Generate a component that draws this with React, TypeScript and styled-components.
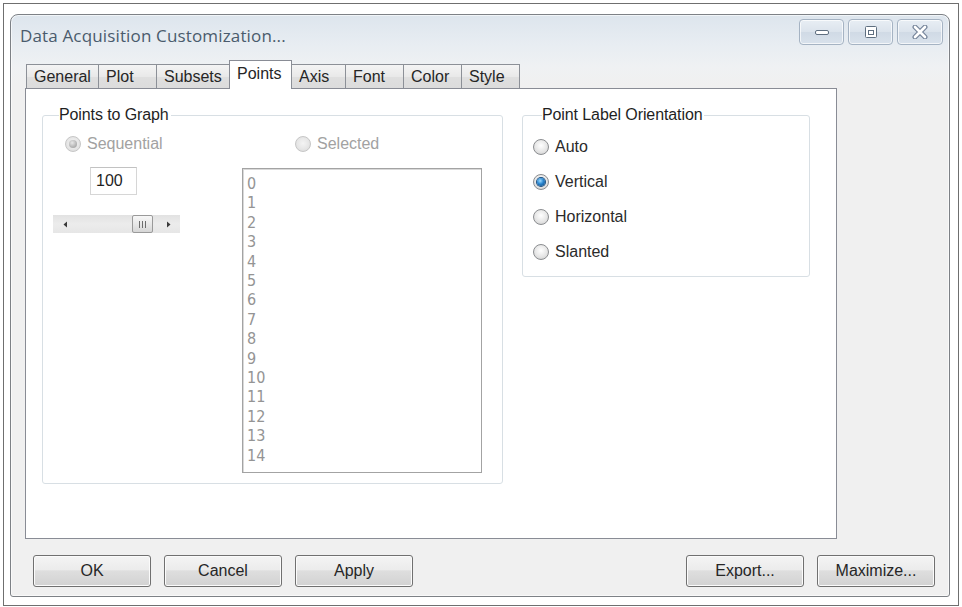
import React from 'react'
import styled, { createGlobalStyle, css } from 'styled-components'

const GlobalStyle = createGlobalStyle`
  html, body {
    margin: 0;
    padding: 0;
    background: #ffffff;
  }
  body {
    font-family: "Liberation Sans", Arial, sans-serif;
    font-size: 16px;
    color: #1f1f1f;
  }
  * {
    box-sizing: border-box;
  }
`

const Page = styled.div`
  width: 962px;
  height: 607px;
  padding: 3px 3px 1px 3px;
`

const Frame = styled.div`
  height: 603px;
  border: 1px solid #6f6f6f;
  padding: 10px 0 0 6px;
`

const Dialog = styled.div`
  width: 940px;
  height: 583px;
  border: 1px solid #7d8186;
  border-radius: 8px 8px 3px 3px;
  background: linear-gradient(to bottom, #dde5ed 0px, #e8edf2 30px, #eff1f3 52px, #f0f0f0 70px);
  display: flex;
  flex-direction: column;
  box-shadow: inset 0 0 0 1px rgba(255, 255, 255, 0.6);
`

const TitleBar = styled.div`
  height: 45px;
  display: flex;
  align-items: flex-start;
  justify-content: space-between;
  padding: 4px 6px 0 9px;
`

const Title = styled.div`
  font-family: "Open Sans", "Noto Sans", sans-serif;
  font-size: 17px;
  letter-spacing: 0.15px;
  color: #4a5b6c;
  padding-top: 5px;
`

const WindowButtons = styled.div`
  display: flex;
  gap: 4px;
`

const WindowButton = styled.div<{ wide?: boolean }>`
  width: ${({ wide }) => (wide ? 46 : 45)}px;
  height: 26px;
  border: 1px solid #a5b3c3;
  border-radius: 4px;
  background: linear-gradient(to bottom, #e8eef4 0%, #dbe3ec 50%, #d0dae5 51%, #d9e2ec 100%);
  box-shadow: inset 0 0 0 1px rgba(255, 255, 255, 0.7);
  display: flex;
  align-items: center;
  justify-content: center;
`

const TabStrip = styled.div`
  display: flex;
  align-items: flex-end;
  height: 29px;
  margin: 0 0 -1px 16px;
  position: relative;
  z-index: 1;
`

const Tab = styled.div<{ active?: boolean; w: number }>`
  width: ${({ w }) => w}px;
  height: 24px;
  margin-bottom: 1px;
  border: 1px solid #8c9097;
  border-bottom: none;
  margin-left: -1px;
  padding: 3px 0 0 7px;
  font-size: 16px;
  color: #262626;
  white-space: nowrap;
  background: linear-gradient(to bottom, #f4f4f4 0%, #e9e9e9 50%, #dfdfdf 51%, #dcdcdc 100%);
  ${({ active }) =>
    active &&
    css`
      height: 29px;
      margin-bottom: 0;
      padding-top: 4px;
      background: #ffffff;
      border-color: #898c95;
    `}
`

const Panel = styled.div`
  margin-left: 14px;
  width: 812px;
  height: 451px;
  border: 1px solid #898c95;
  background: #ffffff;
  display: flex;
  align-items: flex-start;
  gap: 19px;
  padding: 17px 0 0 16px;
`

const Group = styled.fieldset<{ w: number; pad: string }>`
  margin: 0;
  width: ${({ w }) => w}px;
  border: 1px solid #d8dfe4;
  border-radius: 3px;
  padding: ${({ pad }) => pad};
  min-width: 0;
`

const Legend = styled.legend<{ indent: number }>`
  margin-left: ${({ indent }) => indent}px;
  padding: 0 2px 0 0;
  font-size: 16px;
  line-height: 18px;
  color: #1f1f1f;
  letter-spacing: -0.1px;
`

const PointsBody = styled.div`
  display: flex;
  gap: 62px;
`

const LeftColumn = styled.div`
  width: 127px;
  display: flex;
  flex-direction: column;
`

const RightColumn = styled.div`
  display: flex;
  flex-direction: column;
`

const RadioRow = styled.label<{ disabled?: boolean; indent?: number }>`
  display: flex;
  align-items: center;
  gap: 6px;
  height: 20px;
  margin-left: ${({ indent }) => indent ?? 0}px;
  font-size: 16px;
  color: ${({ disabled }) => (disabled ? '#a2a2a2' : '#2b2b2b')};
`

const RadioCircle = styled.span<{ checked?: boolean; disabled?: boolean }>`
  width: 16px;
  height: 16px;
  flex: none;
  border-radius: 50%;
  border: 1px solid ${({ disabled }) => (disabled ? '#c6c6c6' : '#8b8d90')};
  background: ${({ disabled }) =>
    disabled
      ? 'radial-gradient(circle at 50% 45%, #f4f4f4 0%, #e6e6e6 55%, #d6d6d6 100%)'
      : 'radial-gradient(circle at 50% 40%, #ffffff 0%, #e6e6e6 55%, #cacaca 100%)'};
  display: flex;
  align-items: center;
  justify-content: center;

  &::after {
    content: '';
    display: ${({ checked }) => (checked ? 'block' : 'none')};
    width: 8px;
    height: 8px;
    border-radius: 50%;
    background: ${({ disabled }) =>
      disabled
        ? 'radial-gradient(circle at 40% 35%, #e8e8e8 0%, #b4b4b4 60%, #9a9a9a 100%)'
        : 'radial-gradient(circle at 40% 35%, #9fdcff 0%, #2a86d0 45%, #0e4377 100%)'};
    box-shadow: ${({ disabled }) => (disabled ? 'none' : '0 0 0 1px #1b4f80')};
  }
`

const NumberBox = styled.div`
  margin: 13px 0 0 37px;
  width: 47px;
  height: 28px;
  border: 1px solid #d6d6d6;
  border-top-color: #c2c2c2;
  background: #ffffff;
  font-size: 16px;
  color: #1f1f1f;
  padding: 4px 0 0 5px;
`

const ScrollBar = styled.div`
  margin-top: 20px;
  width: 127px;
  height: 18px;
  display: flex;
  background: linear-gradient(to bottom, #e2e2e2 0%, #ececec 50%, #e6e6e6 100%);
`

const ScrollArrow = styled.div`
  width: 24px;
  display: flex;
  align-items: center;
  justify-content: center;
`

const ScrollTrack = styled.div`
  flex: 1;
  display: flex;
`

const ScrollThumb = styled.div`
  width: 21px;
  height: 18px;
  border: 1px solid #9a9a9a;
  border-radius: 2px;
  background: linear-gradient(to bottom, #f7f7f7 0%, #e8e8e8 50%, #d6d6d6 100%);
  display: flex;
  align-items: center;
  justify-content: center;
  gap: 2px;
`

const Grip = styled.span`
  width: 1px;
  height: 7px;
  background: #6d6d6d;
`

const ListBox = styled.div`
  margin-top: 14px;
  width: 240px;
  height: 305px;
  border: 1px solid #a3a3a3;
  box-shadow: inset 1px 1px 0 #d9d9d9;
  background: #ffffff;
  padding: 5px 0 0 4px;
`

const ListItem = styled.div`
  font-family: "Liberation Sans Narrow", "DejaVu Sans Condensed", "Liberation Sans", sans-serif;
  font-size: 16px;
  line-height: 19.4px;
  color: #949494;
`

const OrientationList = styled.div`
  display: flex;
  flex-direction: column;
  gap: 15px;
`

const ButtonRow = styled.div`
  margin-top: 16px;
  padding: 0 14px 0 22px;
  display: flex;
  justify-content: space-between;
`

const ButtonGroup = styled.div`
  display: flex;
  gap: 13px;
`

const PushButton = styled.div`
  width: 118px;
  height: 32px;
  border: 1px solid #707070;
  border-radius: 3px;
  background: linear-gradient(to bottom, #f4f4f4 0%, #ececec 45%, #dedede 50%, #d2d2d2 100%);
  box-shadow: inset 0 0 0 1px #fbfbfb;
  display: flex;
  align-items: center;
  justify-content: center;
  font-size: 16px;
  color: #262626;
`

const tabs = [
  { label: 'General', w: 73 },
  { label: 'Plot', w: 59 },
  { label: 'Subsets', w: 74 },
  { label: 'Points', w: 63, active: true },
  { label: 'Axis', w: 55 },
  { label: 'Font', w: 59 },
  { label: 'Color', w: 59 },
  { label: 'Style', w: 59 },
]

const points = Array.from({ length: 15 }, (_, i) => i)

function MinimizeIcon() {
  return (
    <svg width="16" height="8" viewBox="0 0 16 8">
      <rect x="1.5" y="2.5" width="13" height="4" rx="1.5" fill="#ffffff" stroke="#5f6f80" />
    </svg>
  )
}

function MaximizeIcon() {
  return (
    <svg width="14" height="14" viewBox="0 0 14 14">
      <rect x="1.5" y="1.5" width="11" height="11" rx="1" fill="#ffffff" stroke="#5f6f80" />
      <rect x="4.5" y="5.5" width="5" height="4" fill="none" stroke="#5f6f80" />
    </svg>
  )
}

function CloseIcon() {
  return (
    <svg width="16" height="14" viewBox="0 0 16 14">
      <path d="M3 2 L13 12 M13 2 L3 12" stroke="#76859a" strokeWidth="5" strokeLinecap="round" />
      <path d="M3 2 L13 12 M13 2 L3 12" stroke="#ffffff" strokeWidth="2.6" strokeLinecap="round" />
    </svg>
  )
}

function Arrow({ dir }: { dir: 'left' | 'right' }) {
  return (
    <svg width="5" height="7" viewBox="0 0 5 7">
      {dir === 'left' ? <path d="M4 0.5 L0.5 3.5 L4 6.5 Z" fill="#3a3a3a" /> : <path d="M1 0.5 L4.5 3.5 L1 6.5 Z" fill="#3a3a3a" />}
    </svg>
  )
}

export default function App() {
  const thumbOffset = 55

  return (
    <>
      <GlobalStyle />
      <Page>
        <Frame>
          <Dialog>
            <TitleBar>
              <Title>Data Acquisition Customization...</Title>
              <WindowButtons>
                <WindowButton>
                  <MinimizeIcon />
                </WindowButton>
                <WindowButton>
                  <MaximizeIcon />
                </WindowButton>
                <WindowButton wide>
                  <CloseIcon />
                </WindowButton>
              </WindowButtons>
            </TitleBar>

            <TabStrip>
              {tabs.map((t) => (
                <Tab key={t.label} w={t.w} active={t.active}>
                  {t.label}
                </Tab>
              ))}
            </TabStrip>

            <Panel>
              <Group w={461} pad="10px 20px 10px 10px">
                <Legend indent={6}>Points to Graph</Legend>
                <PointsBody>
                  <LeftColumn>
                    <RadioRow disabled indent={12}>
                      <RadioCircle checked disabled />
                      Sequential
                    </RadioRow>
                    <NumberBox>100</NumberBox>
                    <ScrollBar>
                      <ScrollArrow>
                        <Arrow dir="left" />
                      </ScrollArrow>
                      <ScrollTrack>
                        <ScrollThumb style={{ marginLeft: thumbOffset }}>
                          <Grip />
                          <Grip />
                          <Grip />
                        </ScrollThumb>
                      </ScrollTrack>
                      <ScrollArrow>
                        <Arrow dir="right" />
                      </ScrollArrow>
                    </ScrollBar>
                  </LeftColumn>
                  <RightColumn>
                    <RadioRow disabled indent={53}>
                      <RadioCircle disabled />
                      Selected
                    </RadioRow>
                    <ListBox>
                      {points.map((p) => (
                        <ListItem key={p}>{p}</ListItem>
                      ))}
                    </ListBox>
                  </RightColumn>
                </PointsBody>
              </Group>

              <Group w={288} pad="13px 10px 14px 10px">
                <Legend indent={9}>Point Label Orientation</Legend>
                <OrientationList>
                  <RadioRow>
                    <RadioCircle />
                    Auto
                  </RadioRow>
                  <RadioRow>
                    <RadioCircle checked />
                    Vertical
                  </RadioRow>
                  <RadioRow>
                    <RadioCircle />
                    Horizontal
                  </RadioRow>
                  <RadioRow>
                    <RadioCircle />
                    Slanted
                  </RadioRow>
                </OrientationList>
              </Group>
            </Panel>

            <ButtonRow>
              <ButtonGroup>
                <PushButton>OK</PushButton>
                <PushButton>Cancel</PushButton>
                <PushButton>Apply</PushButton>
              </ButtonGroup>
              <ButtonGroup>
                <PushButton>Export...</PushButton>
                <PushButton>Maximize...</PushButton>
              </ButtonGroup>
            </ButtonRow>
          </Dialog>
        </Frame>
      </Page>
    </>
  )
}
